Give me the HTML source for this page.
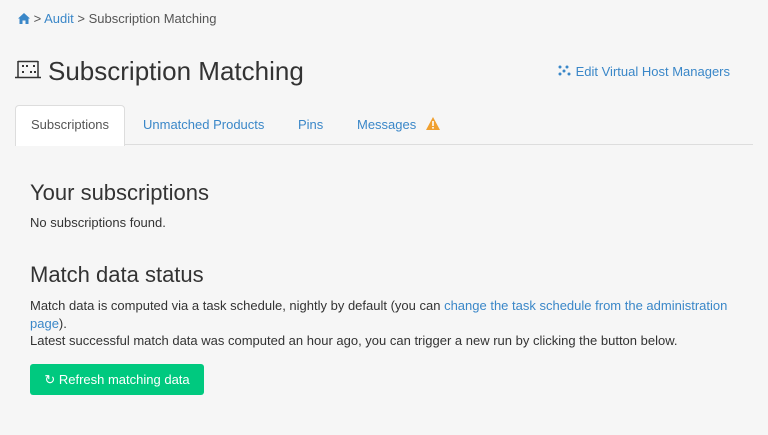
<!DOCTYPE html>
<html><head><style>
body{margin:0;background:#f6f6f6;font-family:"Liberation Sans",sans-serif;width:768px;height:435px;overflow:hidden;position:relative;color:#333}
a{color:#3a87c8;text-decoration:none}
.abs{position:absolute;white-space:nowrap}
</style></head><body>
<div class="abs" style="left:18px;top:11px;font-size:13px;color:#555">
<svg width="12" height="11" viewBox="0 0 12 11" style="vertical-align:-1px"><path d="M6 0 L12 5.5 L10.5 5.5 L10.5 11 L7.5 11 L7.5 7.5 L4.5 7.5 L4.5 11 L1.5 11 L1.5 5.5 L0 5.5 Z" fill="#3a87c8"/></svg> &gt; <a>Audit</a> &gt; Subscription Matching</div>
<svg class="abs" style="left:15px;top:60px" width="26" height="19" viewBox="0 0 26 19"><g fill="none" stroke="#333" stroke-width="1.5"><path d="M3 1V17M23 1V17M0 17.5H26M3 1.5H23"/></g><g fill="#333"><rect x="7" y="5" width="2" height="2"/><rect x="11" y="5" width="2" height="2"/><rect x="18" y="5" width="2" height="2"/><rect x="7" y="11" width="2" height="2"/><rect x="15" y="11" width="2" height="2"/><rect x="19" y="11" width="2" height="2"/></g></svg>
<div class="abs" style="left:48px;top:56px;font-size:26px;color:#333">Subscription Matching</div>
<div class="abs" style="left:558px;top:64px;font-size:13px;color:#3a87c8"><svg width="14" height="11" viewBox="0 0 14 11" style="vertical-align:0"><g fill="#3a87c8"><circle cx="2" cy="2" r="1.5"/><circle cx="9" cy="2" r="1.5"/><circle cx="6" cy="6" r="1.5"/><circle cx="2" cy="9" r="1.5"/><circle cx="11" cy="9" r="1.5"/></g></svg> Edit Virtual Host Managers</div>
<div class="abs" style="left:15px;top:144px;width:738px;height:1px;background:#ddd"></div>
<div class="abs" style="left:15px;top:105px;width:108px;height:40px;background:#fff;border:1px solid #ddd;border-bottom:none;border-radius:4px 4px 0 0"></div>
<div class="abs" style="left:31px;top:117px;font-size:13px;color:#555">Subscriptions</div>
<div class="abs" style="left:143px;top:117px;font-size:13px;color:#3a87c8">Unmatched Products</div>
<div class="abs" style="left:298px;top:117px;font-size:13px;color:#3a87c8">Pins</div>
<div class="abs" style="left:357px;top:117px;font-size:13px;color:#3a87c8">Messages</div>
<svg class="abs" style="left:426px;top:117px" width="14" height="13" viewBox="0 0 14 13"><path d="M7 0L14 13H0Z" fill="#f0a030"/><rect x="6.2" y="4" width="1.6" height="5" fill="#fff"/><rect x="6.2" y="10" width="1.6" height="1.6" fill="#fff"/></svg>
<div class="abs" style="left:30px;top:180px;font-size:22px;color:#333">Your subscriptions</div>
<div class="abs" style="left:30px;top:215px;font-size:13px">No subscriptions found.</div>
<div class="abs" style="left:30px;top:262px;font-size:22px;color:#333">Match data status</div>
<div class="abs" style="left:30px;top:297px;font-size:13px;line-height:17.5px">Match data is computed via a task schedule, nightly by default (you can <a>change the task schedule from the administration</a><br><a>page</a>).<br>Latest successful match data was computed an hour ago, you can trigger a new run by clicking the button below.</div>
<div class="abs" style="left:30px;top:364px;width:174px;height:31px;background:#00c97f;border-radius:3px;color:#fff;font-size:13px;line-height:31px;text-align:center">&#x21bb; Refresh matching data</div>
</body></html>
